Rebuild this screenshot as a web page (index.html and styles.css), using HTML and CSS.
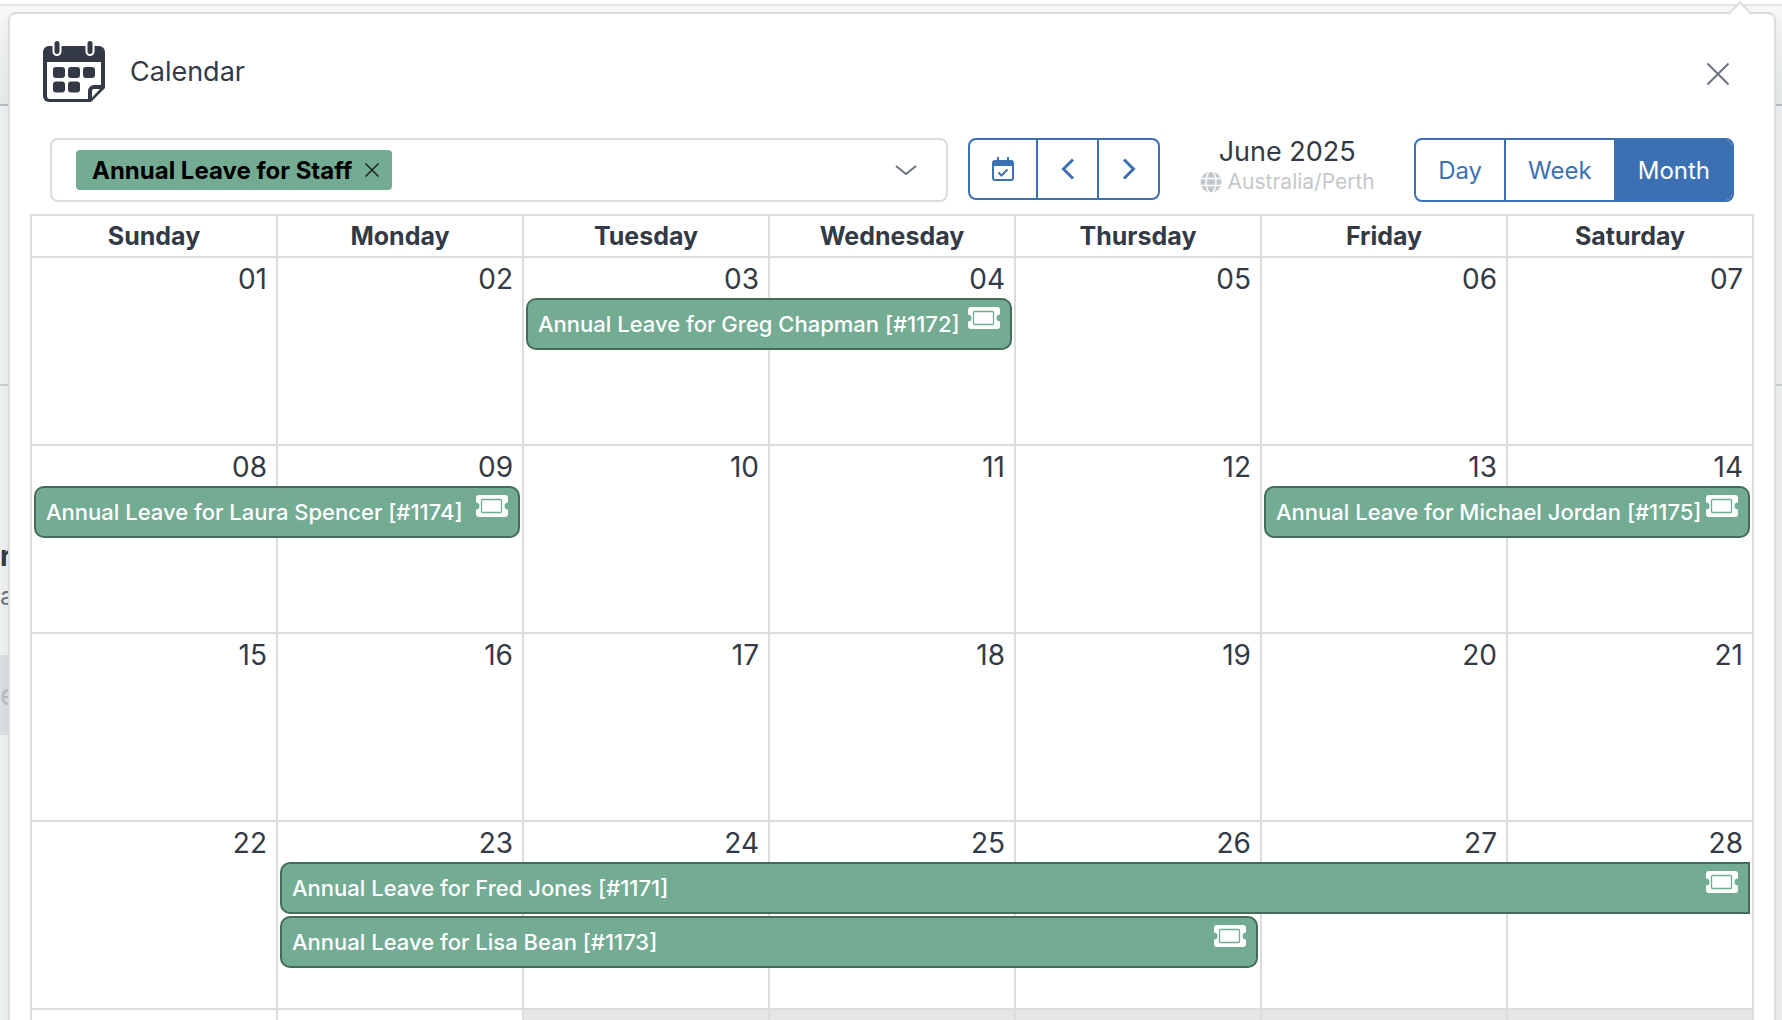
FILE: index.html
```html
<!DOCTYPE html>
<html lang="en">
<head>
    <meta charset="UTF-8">
    <meta name="viewport" content="width=device-width, initial-scale=1.0">
    <title>Calendar</title>
    <link rel="stylesheet" href="styles.css">
</head>
<body>
    <!-- page behind the popover -->
    <div class="page-behind">
        <div class="topbar"></div>
        <div class="subheader"></div>
        <div class="section"></div>
        <div class="snippets">
            <p class="snippet-title">r</p>
            <p class="snippet-text">a</p>
            <p class="snippet-box">e</p>
        </div>
    </div>

    <main class="popover">
        <svg class="popover-arrow" viewBox="0 0 24 14" aria-hidden="true">
            <path class="arrow-fill" d="M0 14 L1 12.500 L12 1.500 L23 12.500 L24 14z"/>
            <path class="arrow-line" d="M0 12.500 L1 12.500 L12 1.500 L23 12.500 L24 12.500"/>
        </svg>

        <header class="popover-header">
            <svg class="calendar-logo" viewBox="0 0 62 62" aria-hidden="true">
                <path d="M6 5h50a6 6 0 0 1 6 6v36L48 61H6a6 6 0 0 1-6-6V11a6 6 0 0 1 6-6z" fill="#333a45"/>
                <path d="M4 21h54v23h-7a6 6 0 0 0-6 6v8H7a3 3 0 0 1-3-3z" fill="#fff"/>
                <path d="M57 48 49 56.500V50a2 2 0 0 1 2-2z" fill="#fff"/>
                <rect x="9.500" y="-1" width="9" height="16" rx="4.500" fill="#fff"/>
                <rect x="42.500" y="-1" width="9" height="16" rx="4.500" fill="#fff"/>
                <g fill="#333a45">
                    <rect x="11.500" y="0" width="5" height="13" rx="2.500"/>
                    <rect x="44.500" y="0" width="5" height="13" rx="2.500"/>
                    <rect x="10" y="26" width="12" height="11" rx="3"/>
                    <rect x="25" y="26" width="12" height="11" rx="3"/>
                    <rect x="40" y="26" width="12" height="11" rx="3"/>
                    <rect x="10" y="40.500" width="12" height="11" rx="3"/>
                    <rect x="25" y="40.500" width="12" height="11" rx="3"/>
                </g>
            </svg>
            <h1>Calendar</h1>
            <button class="close" type="button" aria-label="Close">
                <svg viewBox="0 0 22 22"><path d="M.5.5l21 21M21.500.5l-21 21"/></svg>
            </button>
        </header>

        <div class="toolbar">
            <div class="picker">
                <span class="tag">
                    Annual Leave for Staff
                    <button class="tag-remove" type="button" aria-label="Remove Annual Leave for Staff">
                        <svg viewBox="0 0 14 14"><path d="M.5.5l13 13M13.500.5l-13 13"/></svg>
                    </button>
                </span>
                <button class="picker-toggle" type="button" aria-label="Choose calendars">
                    <svg viewBox="0 0 22 10"><path d="M1 1l10 8 10-8"/></svg>
                </button>
            </div>

            <div class="btn-group nav-group">
                <button type="button" aria-label="Today">
                    <svg class="icon-today" viewBox="0 0 22 24">
                        <path d="M5 0h2v3h8V0h2v3h2a3 3 0 0 1 3 3v15a3 3 0 0 1-3 3H3a3 3 0 0 1-3-3V6a3 3 0 0 1 3-3h2z" fill="#3b71b3"/>
                        <path d="M2 9h18v12a1 1 0 0 1-1 1H3a1 1 0 0 1-1-1z" fill="#fff"/>
                        <path d="M6.500 15.500l3 3 6-6" fill="none" stroke="#3b71b3" stroke-width="2"/>
                    </svg>
                </button>
                <button type="button" aria-label="Previous">
                    <svg class="icon-arrow" viewBox="0 0 14 22"><path d="M12 1.500L2.500 11l9.500 9.500"/></svg>
                </button>
                <button type="button" aria-label="Next">
                    <svg class="icon-arrow" viewBox="0 0 14 22"><path d="M2 1.500l9.500 9.500L2 20.500"/></svg>
                </button>
            </div>

            <div class="period">
                <div class="period-label">June 2025</div>
                <div class="period-zone">
                    <svg viewBox="0 0 22 22" aria-hidden="true">
                        <circle cx="11" cy="11" r="10.500" fill="#c3c8cd"/>
                        <g fill="none" stroke="#fff" stroke-width="1.500">
                            <ellipse cx="11" cy="11" rx="5" ry="11"/>
                            <path d="M0 7.500h22M0 14.500h22"/>
                        </g>
                    </svg>
                    Australia/Perth
                </div>
            </div>

            <div class="btn-group view-group">
                <button type="button">Day</button>
                <button type="button">Week</button>
                <button class="active" type="button">Month</button>
            </div>
        </div>

        <table class="month">
            <thead>
                <tr>
                    <th>Sunday</th>
                    <th>Monday</th>
                    <th>Tuesday</th>
                    <th>Wednesday</th>
                    <th>Thursday</th>
                    <th>Friday</th>
                    <th>Saturday</th>
                </tr>
            </thead>
            <tbody>
                <tr>
                    <td><span class="day">01</span></td>
                    <td><span class="day">02</span></td>
                    <td>
                        <span class="day">03</span>
                        <div class="event span-2">
                            <span class="event-title">Annual Leave for Greg Chapman [#1172]</span>
                            <svg class="ticket"><use href="#ticket"/></svg>
                        </div>
                    </td>
                    <td><span class="day">04</span></td>
                    <td><span class="day">05</span></td>
                    <td><span class="day">06</span></td>
                    <td><span class="day">07</span></td>
                </tr>
                <tr>
                    <td>
                        <span class="day">08</span>
                        <div class="event span-2">
                            <span class="event-title">Annual Leave for Laura Spencer [#1174]</span>
                            <svg class="ticket"><use href="#ticket"/></svg>
                        </div>
                    </td>
                    <td><span class="day">09</span></td>
                    <td><span class="day">10</span></td>
                    <td><span class="day">11</span></td>
                    <td><span class="day">12</span></td>
                    <td>
                        <span class="day">13</span>
                        <div class="event span-2">
                            <span class="event-title">Annual Leave for Michael Jordan [#1175]</span>
                            <svg class="ticket"><use href="#ticket"/></svg>
                        </div>
                    </td>
                    <td><span class="day">14</span></td>
                </tr>
                <tr>
                    <td><span class="day">15</span></td>
                    <td><span class="day">16</span></td>
                    <td><span class="day">17</span></td>
                    <td><span class="day">18</span></td>
                    <td><span class="day">19</span></td>
                    <td><span class="day">20</span></td>
                    <td><span class="day">21</span></td>
                </tr>
                <tr>
                    <td><span class="day">22</span></td>
                    <td>
                        <span class="day">23</span>
                        <div class="event span-6 continues">
                            <span class="event-title">Annual Leave for Fred Jones [#1171]</span>
                            <svg class="ticket"><use href="#ticket"/></svg>
                        </div>
                        <div class="event span-4">
                            <span class="event-title">Annual Leave for Lisa Bean [#1173]</span>
                            <svg class="ticket"><use href="#ticket"/></svg>
                        </div>
                    </td>
                    <td><span class="day">24</span></td>
                    <td><span class="day">25</span></td>
                    <td><span class="day">26</span></td>
                    <td><span class="day">27</span></td>
                    <td><span class="day">28</span></td>
                </tr>
                <tr>
                    <td><span class="day">29</span></td>
                    <td><span class="day">30</span></td>
                    <td class="off-range"><span class="day">01</span></td>
                    <td class="off-range"><span class="day">02</span></td>
                    <td class="off-range"><span class="day">03</span></td>
                    <td class="off-range"><span class="day">04</span></td>
                    <td class="off-range"><span class="day">05</span></td>
                </tr>
            </tbody>
        </table>
    </main>

    <!-- shared ticket icon -->
    <svg class="sprite" aria-hidden="true">
        <symbol id="ticket" viewBox="0 0 32 22">
            <path d="M3 0h26a3 3 0 0 1 3 3v4.500a3.500 3.500 0 0 0 0 7V19a3 3 0 0 1-3 3H3a3 3 0 0 1-3-3v-4.500a3.500 3.500 0 0 0 0-7V3a3 3 0 0 1 3-3z" fill="#fff"/>
            <rect x="5.500" y="4.500" width="20" height="13" rx="1" fill="#fff" stroke="#73ab93" stroke-width="1.300"/>
        </symbol>
    </svg>
</body>
</html>
```
FILE: styles.css
```css
* {
    box-sizing: border-box;
}
body {
    position: relative;
    margin: 0;
    height: 100vh;
    overflow: hidden;
    font-family: Inter, "Liberation Sans", sans-serif;
    color: #333a45;
    background-color: #f1f3f3;
}
button {
    padding: 0;
    border: 0;
    background: none;
    font: inherit;
    color: inherit;
    cursor: pointer;
}
svg {
    display: block;
}
.sprite {
    position: absolute;
    width: 0;
    height: 0;
}

/* page behind the popover */
.page-behind {
    position: absolute;
    inset: 0;
}
.topbar {
    height: 6px;
    background-color: #fff;
    border-bottom: 2px solid #e4e7e8;
}
.subheader {
    height: 100px;
    background: linear-gradient(#f8f9f9, #eaeded);
    border-bottom: 2px solid #b9bfc4;
}
.section {
    height: 280px;
    border-bottom: 2px solid #cdd2d6;
}
.snippets {
    width: 24px;
    padding-top: 150px;
}
.snippets p {
    margin: 0;
    font-size: 28px;
    line-height: 40px;
}
.snippets .snippet-title {
    font-weight: 700;
}
.snippets .snippet-text {
    font-size: 25px;
    color: #6b7680;
}
.snippets .snippet-box {
    margin-top: 39px;
    line-height: 80px;
    color: #b9bfc4;
    background-color: #dde1e4;
}

/* popover */
.popover {
    position: relative;
    margin: 12px 6px 0 8px;
    padding: 0 20px 20px;
    background-color: #fff;
    border: 2px solid #d9dce0;
    border-radius: 8px;
    box-shadow: 0 8px 16px rgba(51, 58, 69, 0.1);
}
.popover-arrow {
    position: absolute;
    top: -13px;
    right: 22px;
    width: 24px;
    height: 14px;
}
.arrow-fill {
    fill: #fff;
}
.arrow-line {
    fill: none;
    stroke: #d9dce0;
    stroke-width: 2;
}
.popover-header {
    display: flex;
    align-items: center;
    height: 116px;
    padding: 0 25px 0 13px;
}
.calendar-logo {
    width: 62px;
    height: 62px;
}
.popover-header h1 {
    margin: 0 auto 0 25px;
    font-size: 27px;
    font-weight: 400;
    line-height: 36px;
}
.close {
    padding-top: 4px;
}
.close svg {
    width: 22px;
    height: 22px;
    fill: none;
    stroke: #6b7280;
    stroke-width: 2;
}

/* toolbar */
.toolbar {
    display: flex;
    align-items: flex-start;
    height: 84px;
    padding: 8px 20px 0;
}
.picker {
    flex: 1;
    display: flex;
    align-items: center;
    justify-content: space-between;
    height: 64px;
    margin-right: 20px;
    padding: 0 29px 0 24px;
    border: 2px solid #d9dce0;
    border-radius: 8px;
}
.tag {
    display: flex;
    align-items: center;
    height: 40px;
    padding: 0 13px 0 16px;
    font-size: 24px;
    font-weight: 700;
    color: #000;
    background-color: #73ab93;
    border-radius: 4px;
}
.tag-remove {
    margin-left: 13px;
}
.tag-remove svg {
    width: 14px;
    height: 14px;
    fill: none;
    stroke: #222;
    stroke-width: 1.5;
}
.picker-toggle svg {
    width: 22px;
    height: 10px;
    fill: none;
    stroke: #6b7280;
    stroke-width: 2;
}
.btn-group {
    display: flex;
    border: 2px solid #3b71b3;
    border-radius: 8px;
    overflow: hidden;
    color: #3b71b3;
}
.btn-group button {
    display: flex;
    align-items: center;
    justify-content: center;
}
.btn-group button + button {
    border-left: 2px solid #3b71b3;
}
.nav-group {
    height: 62px;
}
.nav-group button {
    width: 61px;
}
.nav-group button:first-child {
    width: 66px;
}
.icon-today {
    width: 22px;
    height: 24px;
}
.icon-arrow {
    width: 14px;
    height: 22px;
    fill: none;
    stroke: #3b71b3;
    stroke-width: 3;
}
.period {
    width: 254px;
    text-align: center;
}
.period-label {
    font-size: 27px;
    line-height: 28px;
}
.period-zone {
    display: flex;
    align-items: center;
    justify-content: center;
    gap: 6px;
    font-size: 21px;
    line-height: 32px;
    color: #c3c8cd;
}
.period-zone svg {
    width: 22px;
    height: 22px;
}
.view-group {
    height: 64px;
}
.view-group button {
    padding: 0 22px;
    font-size: 24px;
}
.view-group .active {
    color: #fff;
    background-color: #3b71b3;
}

/* month grid */
.month {
    width: 100%;
    table-layout: fixed;
    border-spacing: 0;
    border-right: 2px solid #dcdcdc;
    border-bottom: 2px solid #dcdcdc;
}
.month th {
    height: 42px;
    padding: 0;
    border-top: 2px solid #dcdcdc;
    border-left: 2px solid #dcdcdc;
    font-size: 25px;
    font-weight: 700;
    line-height: 40px;
}
.month td {
    height: 188px;
    padding: 0;
    vertical-align: top;
    border-top: 2px solid #dcdcdc;
    border-left: 2px solid #dcdcdc;
}
.month .off-range {
    color: #999;
    background-color: #e6e6e6;
}
.day {
    display: block;
    height: 40px;
    padding-right: 9px;
    font-size: 28px;
    line-height: 42px;
    text-align: right;
}
.event {
    position: relative;
    display: flex;
    justify-content: space-between;
    height: 52px;
    margin: 0 0 2px 2px;
    padding: 0 10px;
    color: #fff;
    background-color: #73ab93;
    border: 2px solid #446c5a;
    border-radius: 10px;
}
/* 2px per extra cell border, less the gap at both ends */
.span-2 {
    width: calc(200% - 2px);
}
.span-4 {
    width: calc(400% + 2px);
}
.span-6 {
    width: calc(600% + 6px);
}
.continues {
    border-top-right-radius: 0;
    border-bottom-right-radius: 0;
}
.event-title {
    flex: 0 1 auto;
    min-width: 0;
    overflow: hidden;
    white-space: nowrap;
    font-size: 22px;
    font-weight: 500;
    line-height: 48px;
}
.ticket {
    flex: none;
    width: 32px;
    height: 22px;
    margin-top: 7px;
}
```
